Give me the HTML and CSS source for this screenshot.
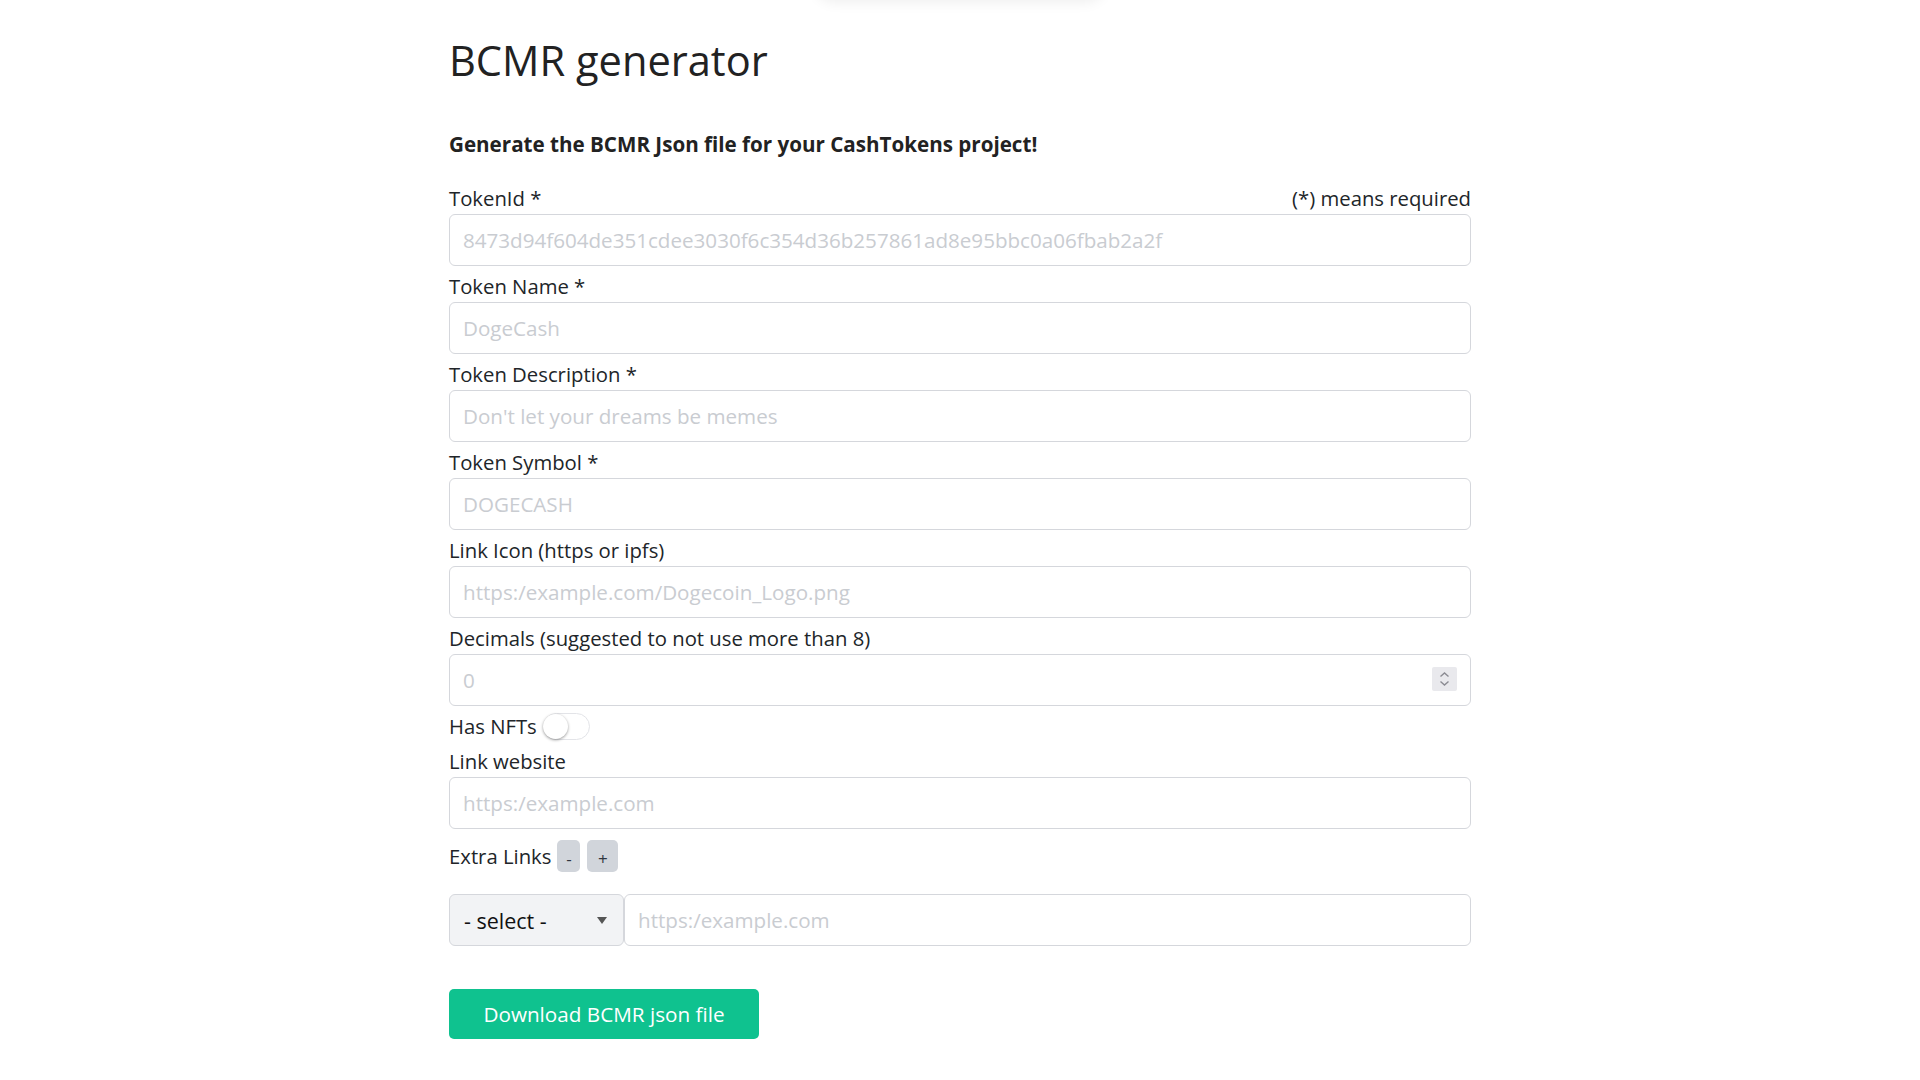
FILE: index.html
```html
<!DOCTYPE html>
<html lang="en">
<head>
<meta charset="utf-8">
<title>BCMR generator</title>
<link rel="stylesheet" href="styles.css">
</head>
<body>
<div class="top-shadow"></div>
<main class="container">
  <h1 class="title">BCMR generator</h1>
  <p class="subtitle">Generate the BCMR Json file for your CashTokens project!</p>

  <div class="field">
    <div class="label-row">
      <label class="label">TokenId *</label>
      <span class="label">(*) means required</span>
    </div>
    <input class="input" type="text" placeholder="8473d94f604de351cdee3030f6c354d36b257861ad8e95bbc0a06fbab2a2f">
  </div>

  <div class="field">
    <label class="label label-row">Token Name *</label>
    <input class="input" type="text" placeholder="DogeCash">
  </div>

  <div class="field">
    <label class="label label-row">Token Description *</label>
    <input class="input" type="text" placeholder="Don't let your dreams be memes">
  </div>

  <div class="field">
    <label class="label label-row">Token Symbol *</label>
    <input class="input" type="text" placeholder="DOGECASH">
  </div>

  <div class="field">
    <label class="label label-row">Link Icon (https or ipfs)</label>
    <input class="input" type="text" placeholder="https:/example.com/Dogecoin_Logo.png">
  </div>

  <div class="field">
    <label class="label label-row">Decimals (suggested to not use more than 8)</label>
    <div class="number-wrap">
      <input class="input input-number" type="number" placeholder="0">
      <span class="spinner">
        <svg width="25" height="24" viewBox="0 0 25 24"><path d="M8.5 9.5 L12.5 6 L16.5 9.5" fill="none" stroke="#8b8b93" stroke-width="1.4"/><path d="M8.5 14.5 L12.5 18 L16.5 14.5" fill="none" stroke="#8b8b93" stroke-width="1.4"/></svg>
      </span>
    </div>
  </div>

  <div class="switch-row">
    <span class="label">Has NFTs</span>
    <span class="switch"><span class="knob"></span></span>
  </div>

  <div class="field">
    <label class="label label-row">Link website</label>
    <input class="input" type="text" placeholder="https:/example.com">
  </div>

  <div class="extra-row">
    <span class="label">Extra Links</span>
    <button class="small-btn minus" type="button">-</button>
    <button class="small-btn plus" type="button">+</button>
  </div>

  <div class="link-row">
    <div class="select-wrap">
      <select class="select">
        <option>- select -</option>
      </select>
      <span class="caret"></span>
    </div>
    <input class="input link-input" type="text" placeholder="https:/example.com">
  </div>

  <button class="download" type="button">Download BCMR json file</button>
</main>
</body>
</html>
```

FILE: styles.css
```css
html, body {
  margin: 0;
  padding: 0;
  background: #ffffff;
}

body {
  font-family: "Open Sans", "Noto Sans", sans-serif;
  color: #212529;
  position: relative;
  overflow: hidden;
}

.top-shadow {
  position: absolute;
  top: -20px;
  left: 50%;
  width: 290px;
  margin-left: -145px;
  height: 20px;
  box-shadow: 0 2px 14px rgba(0, 0, 0, 0.07);
  border-radius: 0 0 40px 40px;
}

.container {
  width: 1022px;
  margin: 0 auto;
  padding-bottom: 40px;
}

.title {
  margin: 35px 0 0;
  font-size: 41.6px;
  line-height: 50px;
  font-weight: 400;
  color: #222;
}

.subtitle {
  margin: 45px 0 0;
  font-size: 20.6px;
  line-height: 28px;
  font-weight: 700;
  color: #222;
}

.subtitle + .field {
  margin-top: 25px;
}

.label {
  font-size: 20.3px;
  line-height: 30px;
  color: #212529;
}

.label-row {
  display: flex;
  justify-content: space-between;
  margin-bottom: 1px;
}

.input {
  display: block;
  box-sizing: border-box;
  width: 100%;
  height: 52px;
  margin: 0 0 5px;
  padding: 0 13px;
  border: 1px solid #d5d7dc;
  border-radius: 6px;
  background: #fff;
  font-family: "Open Sans", "Noto Sans", sans-serif;
  font-size: 20.6px;
  color: #212529;
  outline: none;
}

.input::placeholder {
  color: #c9ccd1;
}

.number-wrap {
  position: relative;
}

.input-number {
  -moz-appearance: textfield;
}

.input-number::-webkit-outer-spin-button,
.input-number::-webkit-inner-spin-button {
  -webkit-appearance: none;
  margin: 0;
}

.spinner {
  position: absolute;
  right: 14px;
  top: 13px;
  width: 25px;
  height: 24px;
  background: #e9e9ed;
  border-radius: 2px;
}

.spinner svg {
  display: block;
}

.switch-row {
  display: flex;
  align-items: flex-start;
  gap: 6px;
  height: 35px;
}

.switch {
  position: relative;
  margin-top: 2px;
  box-sizing: border-box;
  width: 47px;
  height: 27px;
  border: 1px solid #e3e4e8;
  border-radius: 14px;
  background: #fff;
}

.knob {
  position: absolute;
  left: -1px;
  top: 0;
  width: 25px;
  height: 25px;
  border-radius: 50%;
  background: #fff;
  box-shadow: 0 1px 3px rgba(0, 0, 0, 0.4);
}

.extra-row {
  display: flex;
  align-items: center;
  height: 32px;
  margin-top: 11px;
}

.small-btn {
  box-sizing: border-box;
  height: 32px;
  padding: 6px 0 0;
  border: 0;
  border-radius: 5px;
  background: #d1d5db;
  font-family: "Open Sans", "Noto Sans", sans-serif;
  font-size: 17px;
  line-height: 26px;
  color: #2f3640;
}

.minus {
  width: 23px;
  margin-left: 6px;
}

.plus {
  width: 31px;
  margin-left: 7px;
}

.link-row {
  display: flex;
  margin-top: 22px;
}

.select-wrap {
  position: relative;
  flex: 0 0 175px;
}

.select {
  -webkit-appearance: none;
  appearance: none;
  box-sizing: border-box;
  width: 175px;
  height: 52px;
  padding: 0 0 0 14px;
  border: 1px solid #d5d7dc;
  border-radius: 6px;
  background: #f2f3f5;
  font-family: "Open Sans", "Noto Sans", sans-serif;
  font-size: 21.5px;
  color: #111;
  outline: none;
}

.caret {
  position: absolute;
  left: 148px;
  top: 23px;
  width: 0;
  height: 0;
  border-left: 5px solid transparent;
  border-right: 5px solid transparent;
  border-top: 7px solid #555;
}

.link-input {
  flex: 1;
  width: auto;
  margin: 0;
}

.download {
  display: block;
  box-sizing: border-box;
  width: 310px;
  height: 50px;
  margin-top: 43px;
  padding: 0;
  border: 0;
  border-radius: 5px;
  background: #0fc28f;
  color: #fff;
  font-family: "Open Sans", "Noto Sans", sans-serif;
  font-size: 20.7px;
}
```
